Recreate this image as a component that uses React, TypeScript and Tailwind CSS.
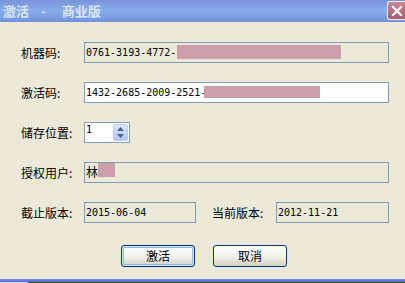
const cjk = "font-['SimSun','Noto_Sans_CJK_SC',sans-serif]";
const mono = "font-['DejaVu_Sans_Mono','Noto_Sans_CJK_SC',monospace]";

const Mask = ({ w, h = 14 }: { w: number; h?: number }) => (
  <span className="inline-block bg-[#CD9FAB]" style={{ width: w, height: h }} />
);

const Label = ({ text, w = 63 }: { text: string; w?: number }) => (
  <div className={`${cjk} text-[12px] leading-none text-black`} style={{ width: w }}>
    {text}
  </div>
);

const Field = ({
  children,
  w = 305,
  white = false,
}: {
  children?: React.ReactNode;
  w?: number;
  white?: boolean;
}) => (
  <div
    className={`flex h-[21px] items-center overflow-hidden border border-[#7F9DB9] pl-[1px] ${
      white ? "bg-white" : "bg-[#ECE9D8]"
    } ${mono} text-[10px] leading-none text-black`}
    style={{ width: w }}
  >
    {children}
  </div>
);

const XpButton = ({ text, active = false }: { text: string; active?: boolean }) => (
  <button
    className={`flex h-[22px] w-[74px] items-center justify-center rounded-[3px] border border-[#003C74] bg-gradient-to-b from-[#FFFFFF] via-[#F4F4F0] to-[#D6D0C5] ${cjk} text-[12px] leading-none text-black ${
      active ? "shadow-[inset_0_0_0_1px_#CEE7FF,inset_0_0_0_2px_#98B8EA]" : ""
    }`}
  >
    {text}
  </button>
);

export default function App() {
  return (
    <div className="flex h-[283px] w-[405px] flex-col overflow-hidden bg-[#ECE9D8]">
      {/* title bar */}
      <div className="flex h-[22px] shrink-0 items-start justify-between bg-gradient-to-b from-[#7A94DC] via-[#86ADEA] to-[#7193DE]">
        <div className={`${cjk} flex pl-[3px] pt-[4px] text-[13px] font-bold leading-none text-[#DDE6F7]`}>
          <span>激活</span>
          <span className="ml-[12px]">-</span>
          <span className="ml-[16px]">商业版</span>
        </div>
        <div className="mt-[1px] flex h-[19px] w-[18px] items-center justify-center rounded-l-[3px] border border-r-0 border-[#E8EEFA] bg-gradient-to-b from-[#C98996] to-[#A9596A]">
          <svg width="12" height="12" viewBox="0 0 12 12">
            <path d="M2 2 L10 10 M10 2 L2 10" stroke="white" strokeWidth="2.2" strokeLinecap="square" />
          </svg>
        </div>
      </div>

      <div className="flex flex-1 flex-col gap-[19px] pt-[20px]">
        <div className="flex items-center pl-[21px]">
          <Label text="机器码:" />
          <Field>
            <span>0761-3193-4772-</span>
            <span className="ml-[1px]">
              <Mask w={164} />
            </span>
          </Field>
        </div>

        <div className="flex items-center pl-[21px]">
          <Label text="激活码:" />
          <Field white>
            <span>1432-2685-2009-2521-</span>
            <span className="-ml-[2px]">
              <Mask w={116} h={12} />
            </span>
          </Field>
        </div>

        <div className="flex items-center pl-[21px]">
          <Label text="储存位置:" />
          <div className={`flex h-[21px] w-[46px] items-center justify-between border border-[#7F9DB9] bg-white pl-[1px] pr-[1px] ${mono} text-[10px] leading-none`}>
            <span className="self-start pt-[2px]">1</span>
            <div className="flex h-[17px] w-[15px] flex-col items-center justify-center gap-[3px] rounded-[2px] border border-[#B8CCF2] bg-gradient-to-b from-[#DDE8FE] to-[#B2C8F4]">
              <svg width="7" height="4" viewBox="0 0 7 4">
                <path d="M0 4 L3.5 0 L7 4 Z" fill="#4D6185" />
              </svg>
              <svg width="7" height="4" viewBox="0 0 7 4">
                <path d="M0 0 L3.5 4 L7 0 Z" fill="#4D6185" />
              </svg>
            </div>
          </div>
        </div>

        <div className="flex items-center pl-[21px]">
          <Label text="授权用户:" />
          <Field>
            <div className="flex h-full items-start">
              <span className={`${cjk} pt-[3px] text-[12px] leading-none`}>林</span>
              <Mask w={17} />
            </div>
          </Field>
        </div>

        <div className="flex items-center pl-[21px]">
          <Label text="截止版本:" />
          <Field w={112}>
            <span>2015-06-04</span>
          </Field>
          <div className="ml-[16px]">
            <Label text="当前版本:" w={64} />
          </div>
          <Field w={113}>
            <span>2012-11-21</span>
          </Field>
        </div>

        <div className="mt-[3px] flex justify-center gap-[18px] pl-[3px]">
          <XpButton text="激活" active />
          <XpButton text="取消" />
        </div>
      </div>

      {/* bottom frame */}
      <div className="h-[3px] shrink-0 bg-gradient-to-b from-[#7B8BE0] to-[#5567CF]" />
      <div className="flex h-[1px] shrink-0">
        <div className="w-[28px] bg-[#C7DCF7]" />
        <div className="flex-1 bg-[#2F5C18]" />
      </div>
    </div>
  );
}
